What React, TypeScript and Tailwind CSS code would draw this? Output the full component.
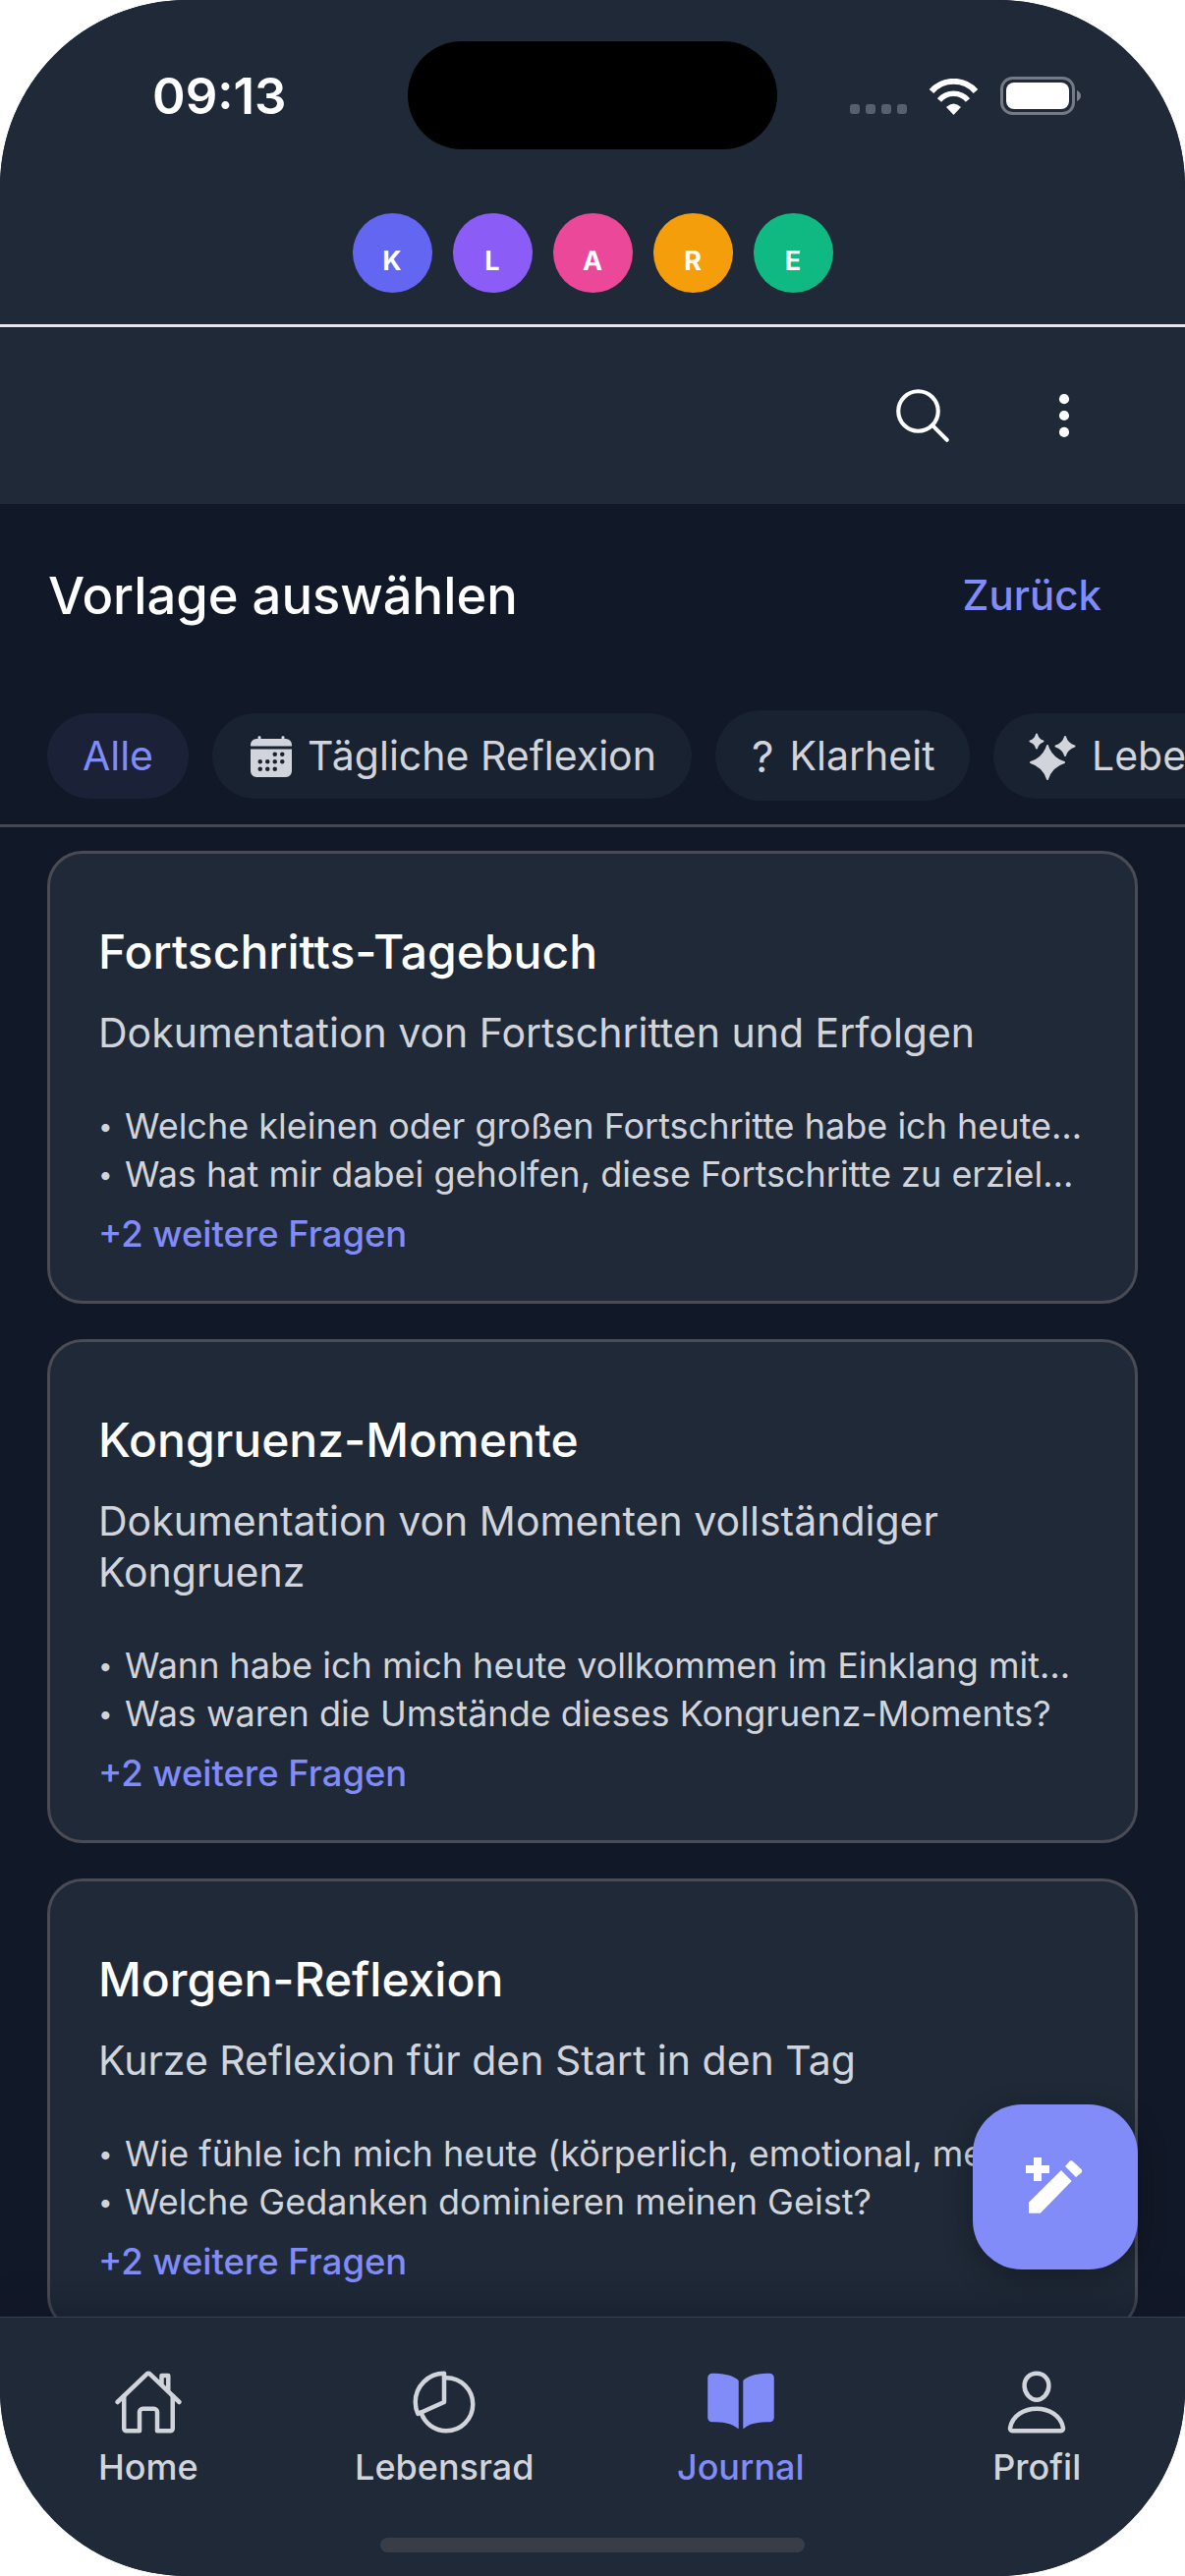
import { IoBook, IoCalendar, IoEllipsisVertical, IoHomeOutline, IoPersonOutline, IoPieChartOutline, IoSearchOutline } from "react-icons/io5";

const letters = [
  { letter: "K", color: "bg-[#6366f1]" },
  { letter: "L", color: "bg-[#8b5cf6]" },
  { letter: "A", color: "bg-[#ec4899]" },
  { letter: "R", color: "bg-[#f59e0b]" },
  { letter: "E", color: "bg-[#10b981]" },
];

const templates = [
  {
    title: "Fortschritts-Tagebuch",
    description: "Dokumentation von Fortschritten und Erfolgen",
    questions: [
      "Welche kleinen oder großen Fortschritte habe ich heute…",
      "Was hat mir dabei geholfen, diese Fortschritte zu erziel…",
    ],
  },
  {
    title: "Kongruenz-Momente",
    description: "Dokumentation von Momenten vollständiger Kongruenz",
    questions: [
      "Wann habe ich mich heute vollkommen im Einklang mit…",
      "Was waren die Umstände dieses Kongruenz-Moments?",
    ],
  },
  {
    title: "Morgen-Reflexion",
    description: "Kurze Reflexion für den Start in den Tag",
    questions: [
      "Wie fühle ich mich heute (körperlich, emotional, mental)?",
      "Welche Gedanken dominieren meinen Geist?",
    ],
  },
];

function StatusIcons() {
  return (
    <div className="flex items-end">
      <div className="flex gap-[6px] mb-[1px]">
        {[0, 1, 2, 3].map((i) => (
          <span key={i} className="w-[10px] h-[10px] rounded-[3px] bg-[#565f6d]" />
        ))}
      </div>
      <svg width="51" height="37" viewBox="0 0 51 37" className="ml-[22px]" fill="none">
        <path d="M3 13A30 30 0 0 1 48 13" stroke="white" strokeWidth="6" />
        <path d="M11 22A19 19 0 0 1 40 22" stroke="white" strokeWidth="5.5" />
        <path d="M18 29Q25.5 22 33 29L25.5 37Z" fill="white" />
      </svg>
      <svg width="82" height="39" viewBox="0 0 82 39" className="ml-[22px]" fill="none">
        <rect x="1.5" y="1.5" width="73" height="36" rx="11" stroke="#747b86" strokeWidth="3" />
        <rect x="6" y="6" width="64" height="27" rx="8" fill="white" />
        <path d="M78 14Q82 16 82 19.5Q82 23 78 25Z" fill="#7b828c" />
      </svg>
    </div>
  );
}

function SparkleIcon() {
  return (
    <svg width="48" height="48" viewBox="0 0 48 48" fill="#d1d5db" stroke="#d1d5db" strokeWidth="2" strokeLinejoin="round">
      <path d="M19 13Q23 26 36 30Q23 34 19 47Q15 34 2 30Q15 26 19 13Z" />
      <path d="M8 1.5Q9.5 7 14.5 8.5Q9.5 10 8 15.5Q6.5 10 1.5 8.5Q6.5 7 8 1.5Z" />
      <path d="M37 4Q39 11 46.5 13.5Q39 16 37 23Q35 16 27.5 13.5Q35 11 37 4Z" />
    </svg>
  );
}

function FabIcon() {
  return (
    <svg width="60" height="60" viewBox="0 0 60 60" fill="white">
      <path d="M8 0H16V8H24V16H16V24H8V16H0V8H8Z" />
      <path d="M3 45.7L36 13L46.7 24L14.7 56.7H3Z" />
      <path d="M40 9L44 4.5Q46 2 48.5 4.5L56 11.5Q58.5 14 56 16L51 20Z" />
    </svg>
  );
}

function Chip({ active, tall, className, children }: { active?: boolean; tall?: boolean; className?: string; children: React.ReactNode }) {
  return (
    <div
      className={`shrink-0 flex items-center rounded-full pt-[2px] text-[41px] whitespace-nowrap ${
        tall ? "h-[92px]" : "h-[87px]"
      } ${active ? "bg-[#1b2137] text-[#818cf8]" : "bg-[#182230] text-[#d1d5db]"} ${className ?? "px-[37px]"}`}
    >
      {children}
    </div>
  );
}

function NavItem({ label, active, children }: { label: string; active?: boolean; children: React.ReactNode }) {
  return (
    <div className={`flex-1 flex flex-col items-center ${active ? "text-[#818cf8]" : "text-[#d1d5db]"}`}>
      <div className="h-[72px] flex items-center justify-center">{children}</div>
      <span className="text-[36px] leading-[48px] font-medium mt-[6px]">{label}</span>
    </div>
  );
}

export default function App() {
  return (
    <div className="w-[1206px] h-[2622px] bg-white font-['Inter',sans-serif]">
      <div className="relative w-full h-full rounded-[190px] overflow-hidden bg-[#111827] flex flex-col">
        <div className="bg-[#1f2937] h-[330px] shrink-0">
          <div className="flex items-start pt-[42px] pl-[155px] h-[152px]">
            <div className="w-[260px] pt-[26px] text-[51px] leading-[60px] font-semibold text-white">09:13</div>
            <div className="w-[376px] h-[110px] rounded-[55px] bg-black" />
            <div className="ml-[74px] pt-[36px]">
              <StatusIcons />
            </div>
          </div>
          <div className="flex justify-center gap-[21px] mt-[65px]">
            {letters.map((l) => (
              <div
                key={l.letter}
                className={`w-[81px] h-[81px] rounded-full flex items-center justify-center pt-[17px] text-[27px] font-bold text-white ${l.color}`}
              >
                {l.letter}
              </div>
            ))}
          </div>
        </div>
        <div className="h-[3px] bg-[#e5e7eb] shrink-0" />
        <div className="bg-[#1f2937] h-[180px] shrink-0 flex items-center justify-end pr-[96px] gap-[84px]">
          <IoSearchOutline className="text-white text-[66px]" />
          <IoEllipsisVertical className="text-white text-[54px]" />
        </div>

        <div className="h-[210px] shrink-0 flex items-start justify-between pl-[49px] pr-[85px] pt-[61px]">
          <div className="text-[52.5px] leading-[64px] font-[550] text-white">Vorlage auswählen</div>
          <div className="text-[42px] leading-[64px] font-medium text-[#818cf8]">Zurück</div>
        </div>

        <div className="flex items-center gap-[24px] pl-[48px] h-[92px] shrink-0 overflow-hidden">
          <Chip active className="w-[144px] justify-center">Alle</Chip>
          <Chip className="w-[488px] pl-[36px]">
            <IoCalendar className="text-[48px] mr-[13px]" />
            Tägliche Reflexion
          </Chip>
          <Chip tall className="w-[259px] pl-[37px]">
            <span className="mr-[16px] text-[44px]">?</span>
            Klarheit
          </Chip>
          <Chip className="pl-[36px]">
            <span className="mr-[16px]">
              <SparkleIcon />
            </span>
            Lebensbereiche
          </Chip>
        </div>
        <div className="h-[3px] bg-[#4b4650] shrink-0 mt-[24px]" />

        <div className="flex-1 min-h-0 overflow-hidden flex flex-col gap-[36px] px-[48px] pt-[24px]">
          {templates.map((t) => (
            <div key={t.title} className="shrink-0 bg-[#1f2937] border-[3px] border-[#4b4b55] rounded-[36px] pl-[49px] pr-[50px] pt-[67px] pb-[43px]">
              <div className="text-[48px] leading-[66px] font-[550] text-white">{t.title}</div>
              <div className="mt-[23px] text-[41px] leading-[52px] text-[#d1d5db]">{t.description}</div>
              <div className="mt-[45px]">
                {t.questions.map((q) => (
                  <div key={q} className="flex text-[36px] leading-[49px] text-[#d1d5db]">
                    <span className="shrink-0 w-[27px] text-[26px]">•</span>
                    <span className="whitespace-nowrap">{q}</span>
                  </div>
                ))}
              </div>
              <div className="mt-[12px] text-[36.4px] leading-[49px] font-medium text-[#818cf8]">+2 weitere Fragen</div>
            </div>
          ))}
        </div>

        <div className="relative shrink-0 h-[264px] bg-[#1f2937] border-t border-[#374151] flex pt-[50px] shadow-[0_-16px_24px_rgba(17,24,39,0.35)]">
          <NavItem label="Home">
            <IoHomeOutline className="text-[72px]" />
          </NavItem>
          <NavItem label="Lebensrad">
            <IoPieChartOutline className="text-[72px]" />
          </NavItem>
          <NavItem label="Journal" active>
            <IoBook className="text-[72px]" />
          </NavItem>
          <NavItem label="Profil">
            <IoPersonOutline className="text-[72px]" />
          </NavItem>
          <div className="absolute bottom-[24px] left-[387px] w-[432px] h-[15px] rounded-full bg-[#393d47]" />
        </div>

        <div className="absolute left-[990px] top-[2142px] w-[168px] h-[168px] rounded-[50px] bg-[#818cf8] flex items-center justify-center shadow-[0_8px_30px_rgba(0,0,0,0.3)]">
          <FabIcon />
        </div>
      </div>
    </div>
  );
}
